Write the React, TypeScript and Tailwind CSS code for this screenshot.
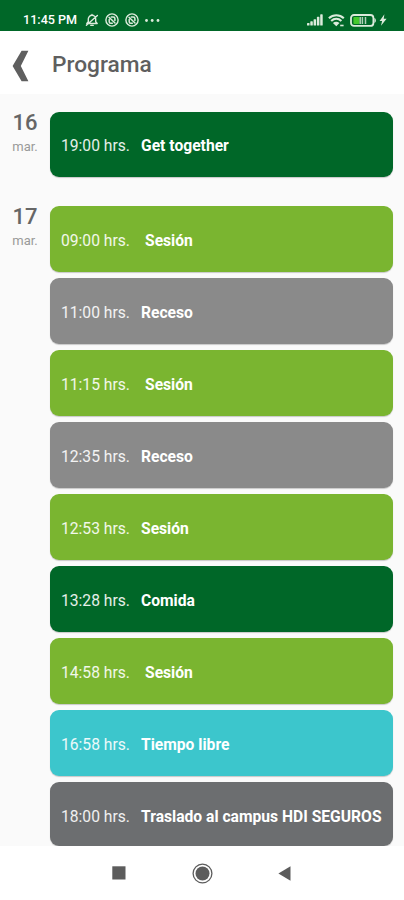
import clsx from 'clsx';

type Kind = 'social' | 'sesion' | 'receso' | 'libre' | 'traslado';

interface Activity {
  time: string;
  title: string;
  kind: Kind;
  indent?: boolean;
}

interface Day {
  day: string;
  month: string;
  activities: Activity[];
}

const KIND_BG: Record<Kind, string> = {
  social:   'bg-[#006728]',
  sesion:   'bg-[#7ab530]',
  receso:   'bg-[#8a8a8a]',
  libre:    'bg-[#3cc6cc]',
  traslado: 'bg-[#6c6e70]',
};

const DAYS: Day[] = [
  {
    day: '16',
    month: 'mar.',
    activities: [{ time: '19:00 hrs.', title: 'Get together', kind: 'social' }],
  },
  {
    day: '17',
    month: 'mar.',
    activities: [
      { time: '09:00 hrs.', title: 'Sesión', kind: 'sesion', indent: true },
      { time: '11:00 hrs.', title: 'Receso', kind: 'receso' },
      { time: '11:15 hrs.', title: 'Sesión', kind: 'sesion', indent: true },
      { time: '12:35 hrs.', title: 'Receso', kind: 'receso' },
      { time: '12:53 hrs.', title: 'Sesión', kind: 'sesion' },
      { time: '13:28 hrs.', title: 'Comida', kind: 'social' },
      { time: '14:58 hrs.', title: 'Sesión', kind: 'sesion', indent: true },
      { time: '16:58 hrs.', title: 'Tiempo libre', kind: 'libre' },
      { time: '18:00 hrs.', title: 'Traslado al campus HDI SEGUROS', kind: 'traslado' },
    ],
  },
];

/* ── Status bar icons ─────────────────────────────────────────── */

const BellOffIcon = () => (
  <svg width="14" height="14" viewBox="0 0 14 14" fill="none" stroke="currentColor" strokeWidth="1.4" strokeLinecap="round" strokeLinejoin="round">
    <path d="M1.8 10.5h10.4l-1.5-1.7V6a3.7 3.7 0 0 0-7.4 0v2.8zM5.8 12.4h2.4M7 1.4v.8M1.4 12.2 12.4 2.4" />
  </svg>
);

const SyncBadgeIcon = () => (
  <svg width="14" height="14" viewBox="0 0 14 14" fill="none" stroke="currentColor" strokeLinecap="round">
    <circle cx="7" cy="7" r="6.1" strokeWidth="1.4" />
    <path d="M4 4.2 10 10M4.2 6.5v2.2c0 1 .6 1.5 1.5 1.5h1.6M6.3 3.9h2c1 0 1.6.6 1.6 1.6v2" strokeWidth="1.5" />
  </svg>
);

const SignalIcon = () => (
  <svg width="16" height="12" viewBox="0 0 16 12" fill="currentColor">
    <rect x="0" y="9" width="2.5" height="2.5" rx=".6" />
    <rect x="3.3" y="7.3" width="2.5" height="4.2" rx=".6" />
    <rect x="6.6" y="5.2" width="2.5" height="6.3" rx=".6" />
    <rect x="9.9" y="2.8" width="2.5" height="8.7" rx=".6" />
    <rect x="13.2" y=".3" width="2.5" height="11.2" rx=".6" />
  </svg>
);

const WifiIcon = () => (
  <svg width="17" height="13" viewBox="0 0 17 13" fill="none" stroke="currentColor" strokeWidth="2.1">
    <path d="M.9 4.3c4.3-4 10.6-4 14.9 0M3.2 7c3-2.8 7.2-2.8 10.2 0" />
    <path d="M4.9 8.9c2-1.7 4.6-1.7 6.6 0L8.3 12.3z" fill="currentColor" stroke="none" />
    <path d="M12.2 11.5h3.4" strokeWidth="1.6" />
  </svg>
);

const BatteryIcon = () => (
  <svg width="27" height="13" viewBox="0 0 27 13">
    <rect x="1" y="1" width="22.4" height="10.9" rx="3" fill="none" stroke="currentColor" strokeWidth="1.8" />
    <path d="M24.4 4c2 .6 2 4.3 0 4.9z" fill="currentColor" />
    <rect x="3.4" y="3" width="6" height="7" rx="1" fill="#45c82e" />
    <path d="M10.2 3v7M12.4 3v7M15.5 3v7" stroke="currentColor" strokeWidth="1.5" opacity=".8" />
  </svg>
);

const BoltIcon = () => (
  <svg width="8" height="12" viewBox="0 0 8 12" fill="currentColor">
    <path d="M5.4.3.6 6.9h2.5L2 11.7l5.6-7H4.7z" />
  </svg>
);

const StatusBar = () => (
  <div className="flex h-[31px] shrink-0 items-center bg-[#006728] pt-[9px] pl-[23px] pr-[17px] text-[#dcebdc]">
    <span className="w-[62px] whitespace-nowrap text-[12.6px] font-medium leading-none text-white">11:45 PM</span>
    <div className="flex items-center gap-[6px]">
      <BellOffIcon />
      <SyncBadgeIcon />
      <SyncBadgeIcon />
      <svg width="15" height="3" viewBox="0 0 15 3" fill="currentColor">
        <circle cx="1.5" cy="1.5" r="1.4" />
        <circle cx="7.2" cy="1.5" r="1.4" />
        <circle cx="13" cy="1.5" r="1.4" />
      </svg>
    </div>
    <div className="ml-auto flex items-center">
      <SignalIcon />
      <span className="ml-[5px]"><WifiIcon /></span>
      <span className="ml-[5px]"><BatteryIcon /></span>
      <span className="ml-[2px]"><BoltIcon /></span>
    </div>
  </div>
);

const ActivityCard = ({ time, title, kind, indent }: Activity) => (
  <div
    className={clsx(
      'flex shrink-0 items-center rounded-[9px] pl-[11px] pt-[3px] text-[15.65px] whitespace-nowrap text-white shadow-[0_1px_1px_rgba(0,0,0,0.2)]',
      kind === 'traslado' ? 'h-16 pt-[5px]' : 'h-[65.5px]',
      KIND_BG[kind],
    )}
  >
    <span className="w-20 shrink-0 text-white/90">{time}</span>
    <span className={clsx('font-bold', indent && 'pl-1')}>{title}</span>
  </div>
);

export default function App() {
  return (
    <div
      className="flex h-[900px] w-[404px] flex-col overflow-hidden bg-[#fafafa]"
      style={{ fontFamily: 'Roboto, "Noto Sans", sans-serif' }}
    >
      <StatusBar />

      {/* Header */}
      <header className="flex h-[63px] shrink-0 items-center bg-white pl-3 text-[#5f5f5f]">
        <button className="mt-[7px]" aria-label="Atrás">
          <svg width="17" height="32" viewBox="0 0 17 32" fill="currentColor">
            <path d="M9.6.8h6.8L8.8 16l7.6 15.2H9.6L.6 16z" />
          </svg>
        </button>
        <h1 className="ml-[23px] mt-[6px] text-[22.7px] font-medium">Programa</h1>
      </header>

      {/* Schedule */}
      <main className="flex min-h-0 flex-1 flex-col gap-[29px] overflow-hidden pt-[17.5px] pr-[11px]">
        {DAYS.map(({ day, month, activities }) => (
          <section key={day} className="flex shrink-0">
            <div className="w-[50px] shrink-0 text-center text-[#666]">
              <p className="mt-[-1px] text-[22px] font-medium leading-6">{day}</p>
              <p className="text-[13px] leading-6 text-[#999]">{month}</p>
            </div>
            <div className="flex flex-1 flex-col gap-[6.5px]">
              {activities.map(a => (
                <ActivityCard key={a.time} {...a} />
              ))}
            </div>
          </section>
        ))}
      </main>

      {/* Android navigation */}
      <nav className="flex h-[54px] shrink-0 items-center bg-white pl-[112px] text-[#5c5c5c]">
        <svg width="14" height="14" viewBox="0 0 14 14" fill="currentColor">
          <rect x=".3" y=".3" width="13.2" height="13.2" />
        </svg>
        <svg className="ml-[66px]" width="21" height="21" viewBox="0 0 21 21">
          <circle cx="10.5" cy="10.5" r="9.4" fill="none" stroke="currentColor" strokeWidth="1.3" />
          <circle cx="10.5" cy="10.5" r="7" fill="currentColor" />
        </svg>
        <svg className="ml-[65px]" width="13" height="15" viewBox="0 0 13 15" fill="currentColor">
          <path d="M12.5.3v14.4L.4 7.5z" />
        </svg>
      </nav>
    </div>
  );
}
